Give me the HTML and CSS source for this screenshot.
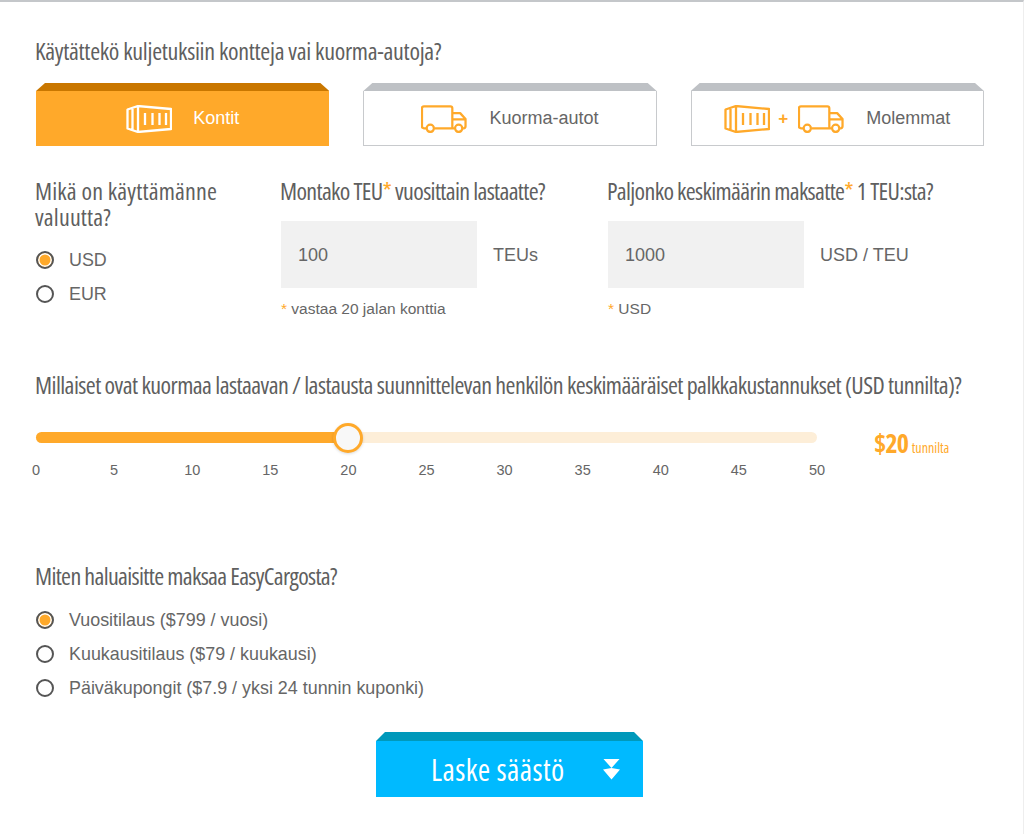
FILE: index.html
```html
<!DOCTYPE html>
<html lang="en">
<head>
    <meta charset="UTF-8">
    <meta name="viewport" content="width=device-width, initial-scale=1.0">
    <title>EasyCargo</title>
    <link rel="stylesheet" href="styles.css">
</head>
<body>
    <svg class="icon-defs" width="0" height="0">
        <symbol id="container" viewBox="0 0 46 28">
            <path d="M1.5 4.5 L12 1 L45 4 V24 L12 27 L1.5 23.5 Z M12 1 V27 M6.5 3 V25 M19 8 V20 M26.5 8 V20 M33.5 8 V20 M40 8 V20" fill="none" stroke="currentColor" stroke-width="2.3" stroke-linejoin="round"/>
        </symbol>
        <symbol id="truck" viewBox="0 0 47 28">
            <path d="M5.5 23.5 H3 Q1 23.5 1 21.5 V3 Q1 1 3 1 H30 Q32 1 32 3 V23.5 H14 M32 8 H40 L45.5 14 V21.5 Q45.5 23.5 43.5 23.5 H43 M32 14.5 H45.5 M32 23.5 H34" fill="none" stroke="currentColor" stroke-width="2.3" stroke-linejoin="round"/>
            <circle cx="9.5" cy="23.5" r="3.7" fill="none" stroke="currentColor" stroke-width="2.3"/>
            <circle cx="38.5" cy="23.5" r="3.7" fill="none" stroke="currentColor" stroke-width="2.3"/>
        </symbol>
    </svg>

    <main class="calculator">
        <h2 class="question top-question">Käytättekö kuljetuksiin kontteja vai kuorma-autoja?</h2>
        <div class="tabs">
            <div class="tab active">
                <svg class="icon"><use href="#container"/></svg>
                <span class="tab-label">Kontit</span>
            </div>
            <div class="tab">
                <svg class="icon"><use href="#truck"/></svg>
                <span class="tab-label">Kuorma-autot</span>
            </div>
            <div class="tab">
                <svg class="icon"><use href="#container"/></svg>
                <span class="plus">+</span>
                <svg class="icon"><use href="#truck"/></svg>
                <span class="tab-label">Molemmat</span>
            </div>
        </div>

        <div class="fields">
            <div>
                <h2 class="question currency-question">Mikä on käyttämänne valuutta?</h2>
                <div class="radios currency-radios">
                    <label class="radio"><input type="radio" name="currency" checked> USD</label>
                    <label class="radio"><input type="radio" name="currency"> EUR</label>
                </div>
            </div>
            <div>
                <h2 class="question">Montako TEU<span class="star">*</span> vuosittain lastaatte?</h2>
                <div class="input-row">
                    <input class="number" type="text" value="100">
                    <span class="unit">TEUs</span>
                </div>
                <p class="note"><span class="star">*</span> vastaa 20 jalan konttia</p>
            </div>
            <div>
                <h2 class="question">Paljonko keskimäärin maksatte<span class="star">*</span> 1 TEU:sta?</h2>
                <div class="input-row">
                    <input class="number" type="text" value="1000">
                    <span class="unit">USD / TEU</span>
                </div>
                <p class="note"><span class="star">*</span> USD</p>
            </div>
        </div>

        <h2 class="question wage-question">Millaiset ovat kuormaa lastaavan / lastausta suunnittelevan henkilön keskimääräiset palkkakustannukset (USD tunnilta)?</h2>
        <div class="slider-row">
            <div class="slider">
                <div class="track">
                    <div class="fill" style="width: 40%"></div>
                    <div class="knob" style="left: 40%"></div>
                </div>
                <div class="ticks">
                    <span>0</span><span>5</span><span>10</span><span>15</span><span>20</span><span>25</span>
                    <span>30</span><span>35</span><span>40</span><span>45</span><span>50</span>
                </div>
            </div>
            <div class="wage"><strong>$20</strong> tunnilta</div>
        </div>

        <h2 class="question payment-question">Miten haluaisitte maksaa EasyCargosta?</h2>
        <div class="radios">
            <label class="radio"><input type="radio" name="plan" checked> Vuositilaus ($799 / vuosi)</label>
            <label class="radio"><input type="radio" name="plan"> Kuukausitilaus ($79 / kuukausi)</label>
            <label class="radio"><input type="radio" name="plan"> Päiväkupongit ($7.9 / yksi 24 tunnin kuponki)</label>
        </div>

        <div class="submit-wrap">
            <button class="submit" type="button">
                <span>Laske säästö</span>
                <span class="arrows"></span>
            </button>
        </div>
    </main>
</body>
</html>
```

FILE: styles.css
```css
body {
    margin: 0;
    font-family: "Liberation Sans", Arial, sans-serif;
    color: #666;
    background-color: #fff;
}
.icon-defs {
    position: absolute;
}
.calculator {
    height: 834px;
    box-sizing: border-box;
    border-top: 2px solid #c4c7ca;
    border-right: 1px solid #eee;
    padding: 36px 39px 0 36px;
}
.question {
    margin: 0 0 0 -1px;
    font-family: "Open Sans", sans-serif;
    font-stretch: 75%;
    font-size: 24px;
    font-weight: 500;
    letter-spacing: -0.66px;
    line-height: 26px;
    white-space: nowrap;
    color: #5f5f5f;
}
.top-question {
    letter-spacing: -0.3px;
}
.star {
    color: #ffa92a;
}

/* tabs */
.tabs {
    display: flex;
    gap: 34px;
    margin-top: 19px;
}
.tab {
    position: relative;
    flex: 1;
    height: 55px;
    margin-top: 8px;
    padding-top: 1px;
    box-sizing: border-box;
    display: flex;
    align-items: center;
    justify-content: center;
    gap: 8px;
    border: 1px solid #c8cacd;
    border-top: 0;
    font-size: 17px;
    color: #ffa92a;
}
.tab::before {
    content: "";
    position: absolute;
    left: -1px;
    right: -1px;
    top: -8px;
    height: 8px;
    background-color: #bec1c5;
    clip-path: polygon(9px 0, calc(100% - 9px) 0, 100% 100%, 0 100%);
}
.tab.active {
    background-color: #ffa92a;
    border-color: #ffa92a;
    color: #fff;
}
.tab.active::before {
    background-color: #c97700;
}
.tab-label {
    margin-left: 14px;
    font-size: 18px;
    color: #666;
}
.tab.active .tab-label {
    margin-left: 13px;
    color: #fff;
}
.icon {
    width: 46px;
    height: 28px;
}
.plus {
    margin-right: 2px;
    font-weight: bold;
}

/* fields */
.fields {
    display: grid;
    grid-template-columns: 245px 327px 1fr;
    margin-top: 32px;
}
.currency-question {
    white-space: normal;
    width: 200px;
    letter-spacing: 0.15px;
}
.radios {
    display: flex;
    flex-direction: column;
    gap: 14px;
    margin-top: 21px;
}
.currency-radios {
    margin-top: 20px;
}
.radio {
    display: flex;
    align-items: center;
    gap: 15px;
    height: 20px;
    font-size: 17.9px;
}
.radio input {
    appearance: none;
    width: 18px;
    height: 18px;
    margin: 0;
    box-sizing: border-box;
    border: 2.5px solid #555;
    border-radius: 50%;
    background-color: #fff;
}
.radio input:checked {
    background-color: #ffa92a;
    box-shadow: inset 0 0 0 1.5px #fff;
}
.input-row {
    display: flex;
    align-items: center;
    gap: 16px;
    margin-top: 17px;
    font-size: 18px;
}
.number {
    width: 196px;
    height: 67px;
    box-sizing: border-box;
    border: 0;
    padding: 2px 17px 0;
    background-color: #f1f1f1;
    font-family: inherit;
    font-size: 18px;
    color: #666;
}
.unit {
    padding-top: 2px;
}
.note {
    margin: 12px 0 0;
    font-size: 15.5px;
    line-height: 17px;
}

/* slider */
.wage-question {
    margin-top: 55px;
    letter-spacing: -0.56px;
}
.slider-row {
    display: flex;
    margin-top: 34px;
}
.slider {
    width: 781px;
}
.track {
    position: relative;
    height: 11px;
    border-radius: 6px;
    background-color: #fdeed8;
}
.fill {
    height: 100%;
    border-radius: 6px 0 0 6px;
    background-color: #ffa92a;
}
.knob {
    position: absolute;
    top: 50%;
    width: 30px;
    height: 30px;
    box-sizing: border-box;
    transform: translate(-50%, -50%);
    border: 3px solid #ffa92a;
    border-radius: 50%;
    background-color: #f8f8f8;
    box-shadow: 0 1px 3px rgba(0, 0, 0, 0.15);
}
.ticks {
    display: flex;
    justify-content: space-between;
    margin-top: 19px;
    font-size: 14.5px;
    line-height: 16px;
}
.ticks span {
    width: 0;
    display: flex;
    justify-content: center;
}
.wage {
    margin-left: 57px;
    margin-top: -7px;
    font-family: "Open Sans", sans-serif;
    font-stretch: 75%;
    font-size: 14px;
    white-space: nowrap;
    color: #ffa92a;
}
.wage strong {
    margin-right: 1px;
    font-size: 26px;
    letter-spacing: -0.8px;
}

/* payment */
.payment-question {
    margin-top: 85px;
}

/* button */
.submit-wrap {
    display: flex;
    justify-content: center;
    margin: 34px 0 0 -1px;
}
.submit {
    position: relative;
    width: 267px;
    height: 56px;
    margin-top: 9px;
    border: 0;
    padding: 0 23px 0 55px;
    display: flex;
    align-items: center;
    justify-content: space-between;
    background-color: #00baff;
    font-family: "Open Sans", sans-serif;
    font-stretch: 75%;
    font-size: 30px;
    font-weight: 500;
    letter-spacing: 0.4px;
    color: #fff;
}
.submit::before {
    content: "";
    position: absolute;
    left: 0;
    right: 0;
    top: -9px;
    height: 9px;
    background-color: #0099bb;
    clip-path: polygon(9px 0, calc(100% - 9px) 0, 100% 100%, 0 100%);
}
.arrows {
    width: 17px;
    height: 21px;
    background-color: #fff;
    clip-path: polygon(0 0, 100% 0, 50% 45%, 100% 52%, 50% 100%, 0 52%, 50% 45%);
}
```
